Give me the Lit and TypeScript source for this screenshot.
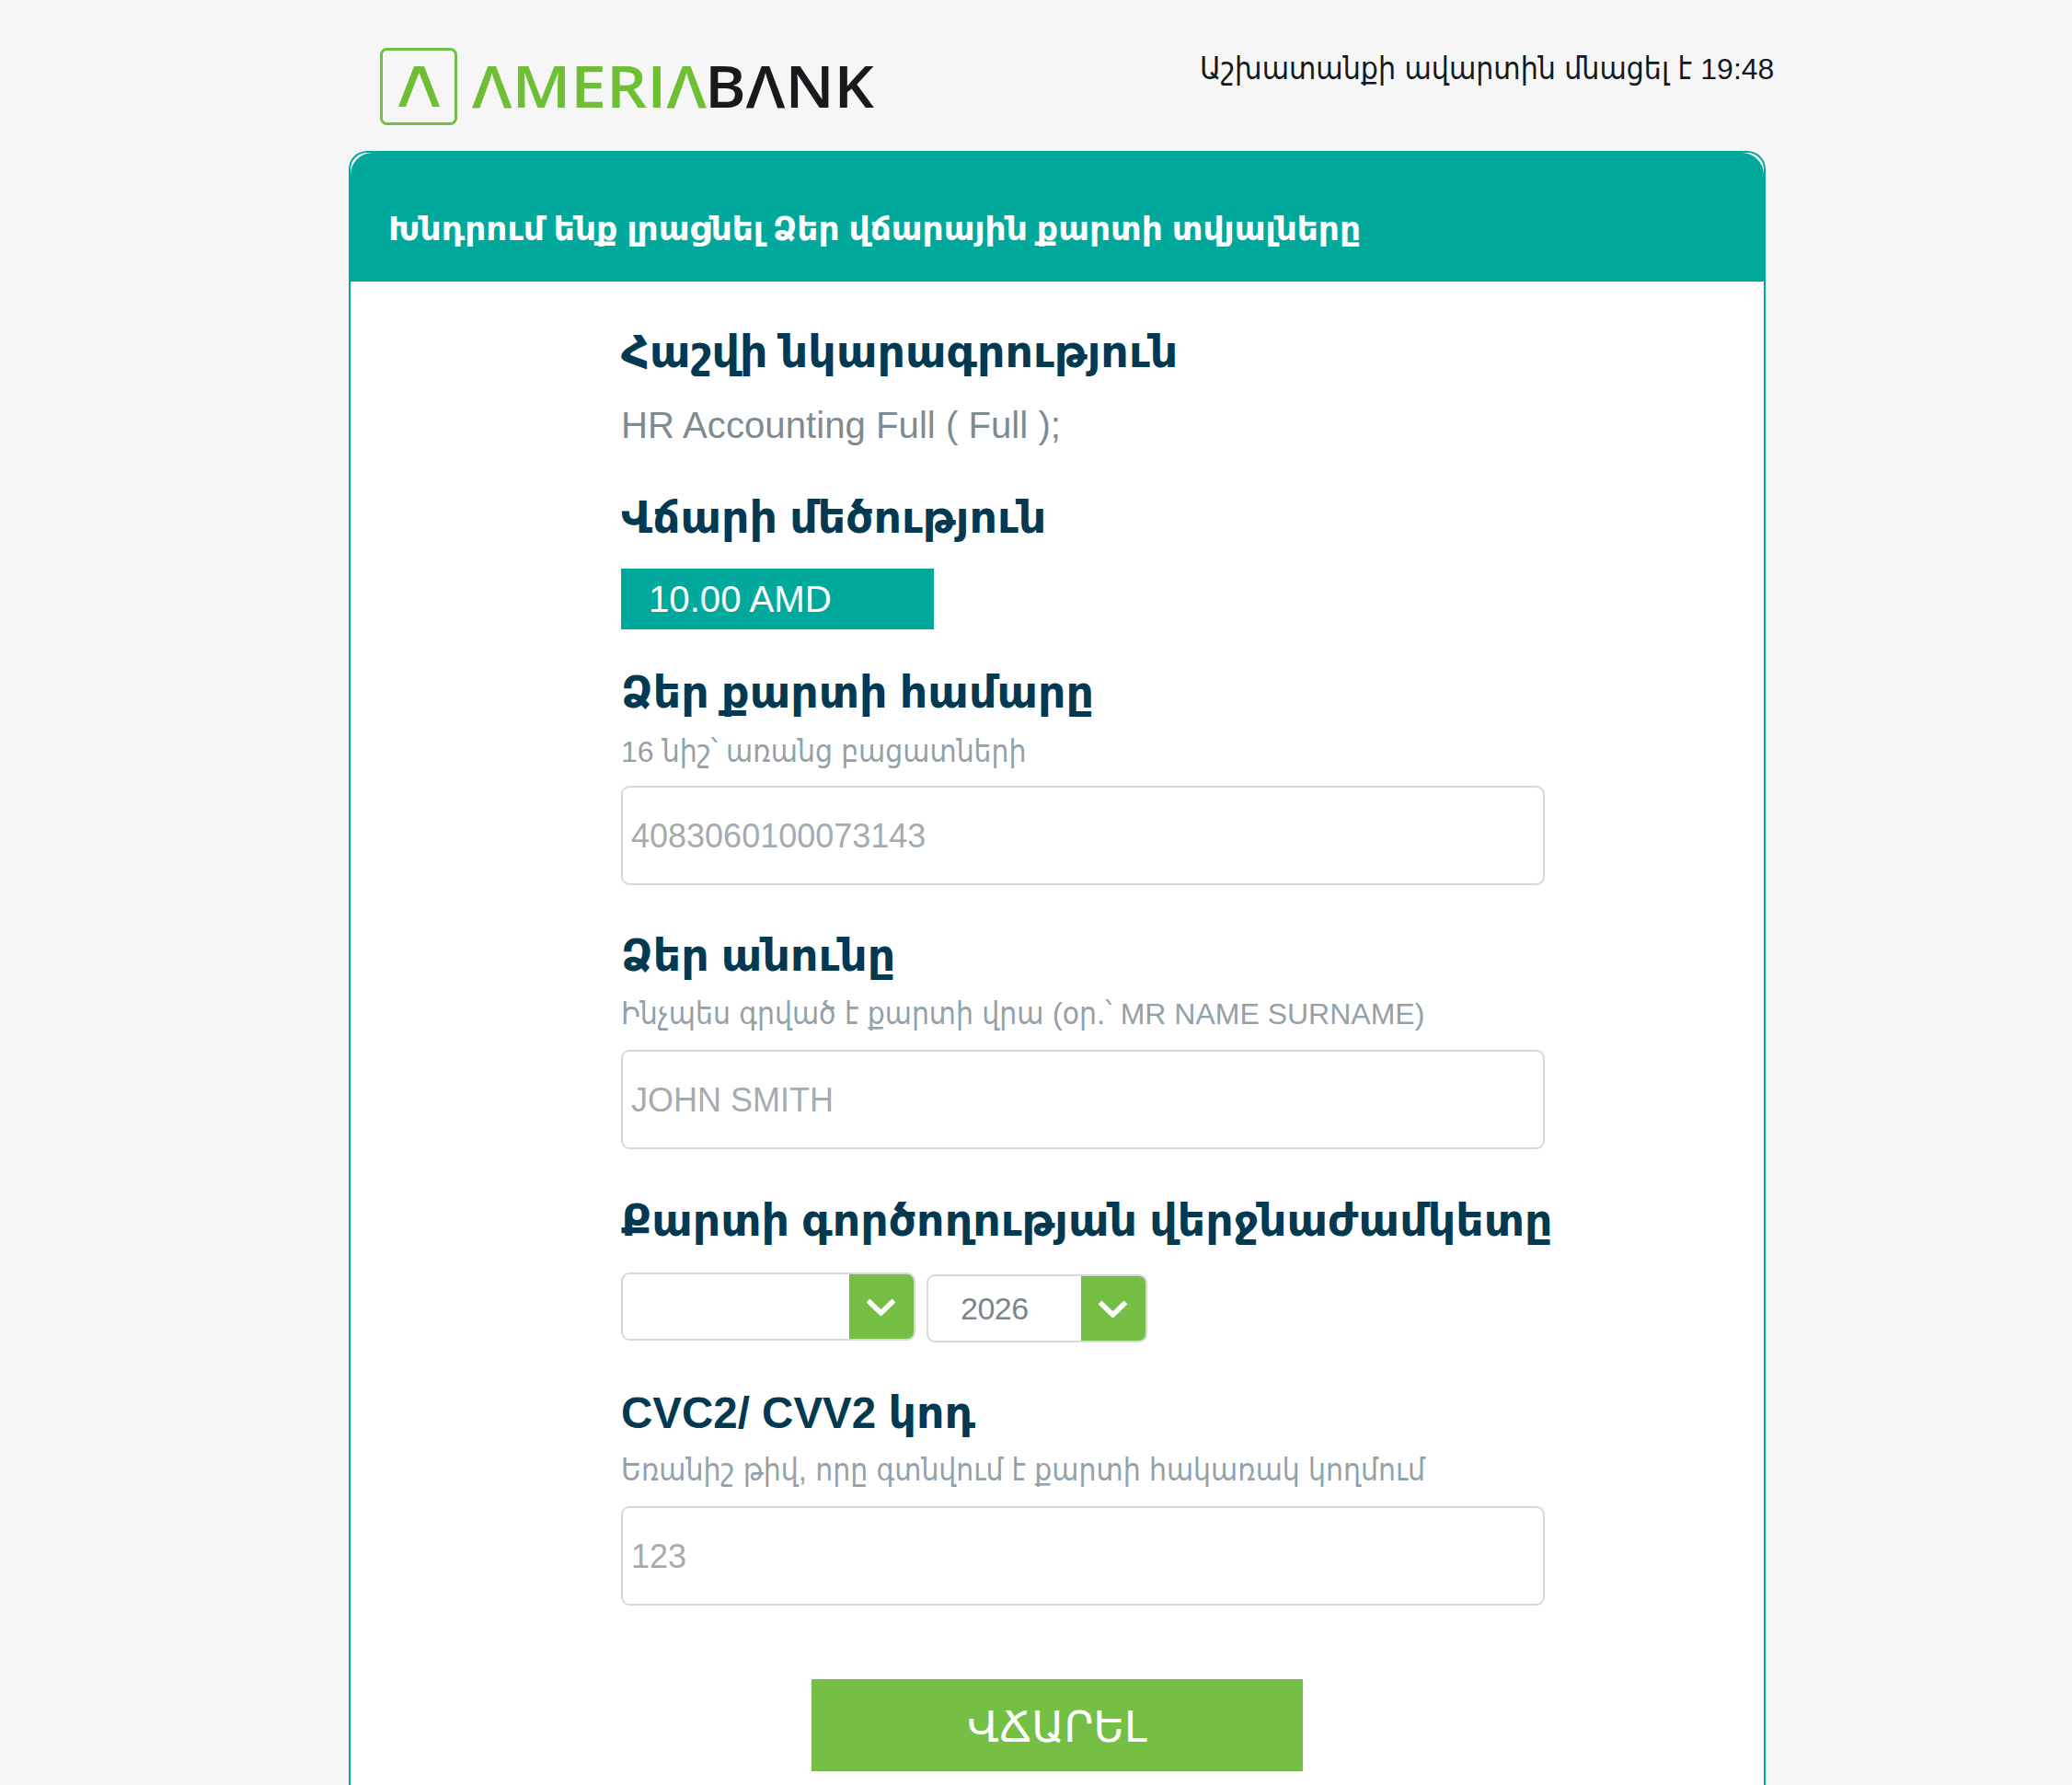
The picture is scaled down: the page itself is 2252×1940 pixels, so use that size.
import { LitElement, html, css } from "lit";
import { customElement } from "lit/decorators.js";

const chevron = html`<svg class="chev" viewBox="0 0 33 19" width="33" height="19"><path d="M2.5 2.5 L16.5 16 L30.5 2.5" fill="none" stroke="#fff" stroke-width="5.5"/></svg>`;

@customElement("app-root")
export class AppRoot extends LitElement {
  static styles = css`
    :host { display: block; height: 1940px; overflow: hidden; background: #f6f6f6; font-family: "Liberation Sans", "DejaVu Sans", sans-serif; }
    * { box-sizing: border-box; }
    .top { display: flex; height: 164px; padding-left: 413px; padding-top: 52px; }
    .logo { display: block; width: 540px; height: 84px; overflow: visible; }
    .timer { position: absolute; left: 1304px; top: 52px; width: 640px; font-size: 33.5px; line-height: 46px; color: #15191c; font-stretch: condensed; white-space: nowrap; }
    .lat { font-size: 32px; }
    .panel { margin-left: 379px; width: 1540px; height: 1776px; background: #fff; border: 2px solid #00a99d; border-bottom: 0; border-radius: 20px 20px 0 0; overflow: hidden; }
    .head { height: 140px; padding: 26px 0 0 41px; display: flex; align-items: center; background: #01a99d; border-radius: 24px 24px 0 0; color: #fff; font-weight: 700; font-size: 36px; white-space: nowrap; }
    .form { margin-left: 294px; width: 1004px; padding-top: 46px; display: flex; flex-direction: column; align-items: flex-start; }
    h2 { margin: 0 0 -1px; padding-top: 1px; font-size: 47.5px; line-height: 60px; font-weight: 700; color: #033a52; white-space: nowrap; }
    .desc { margin-top: 25px; margin-bottom: -1px; padding-top: 1px; font-size: 40.2px; line-height: 50px; color: #7f8b92; }
    .amount { margin-top: 26px; width: 340px; height: 66px; padding: 1px 0 0 30px; display: flex; align-items: center; background: #01a99d; color: #fff; font-size: 40.2px; }
    .sub { margin-bottom: -1px; padding-top: 1px; font-size: 33.3px; line-height: 40px; color: #93a1a9; font-stretch: condensed; white-space: nowrap; }
    .field { width: 1004px; height: 108px; padding: 2px 0 0 9px; border: 2px solid #d8d8d8; border-radius: 9px; background: #fff; font: 36px "Liberation Sans", sans-serif; outline: none; }
    .field::placeholder { color: #a6abaf; opacity: 1; }
    .selects { display: flex; align-items: flex-start; gap: 12px; margin-top: 27px; }
    .select { display: flex; height: 74px; border: 2px solid #d8d8d8; border-radius: 9px; background: #fff; overflow: hidden; }
    .select .val { flex: 1; display: flex; align-items: center; padding-left: 35px; font-size: 34px; color: #7a868e; letter-spacing: -0.5px; }
    .select .arrow { width: 70px; display: flex; align-items: center; justify-content: center; padding-right: 2px; background: #74bf44; }
    .month { width: 320px; }
    .year { width: 240px; margin-top: 2px; }
    .btnrow { display: flex; justify-content: center; margin-top: 80px; }
    .btn { width: 534px; height: 100px; padding-top: 5px; border: 0; background: #74bf44; color: #fff; font: 46px "DejaVu Sans", sans-serif; }
    .mt46 { margin-top: 46px; } .mt45 { margin-top: 45px; } .mt38 { margin-top: 38px; } .mt47 { margin-top: 47px; }
    .mt14 { margin-top: 14px; } .mt13 { margin-top: 13px; } .mt12 { margin-top: 12px; } .mt18 { margin-top: 18px; } .mt20 { margin-top: 20px; }
  `;

  render() {
    return html`
      <div class="top">
        <svg class="logo" viewBox="0 0 540 84">
          <rect x="1.5" y="1.5" width="81" height="81" rx="6" fill="none" stroke="#74bf44" stroke-width="3"/>
          <path d="M20 64 L37 20 H48 L65 64 H57 L42.500 27 L28 64 Z" fill="#6fbf35"/>
          <text x="100" y="65" font-family="Open Sans" font-size="63" font-weight="600" fill="#6fbf35" textLength="255" lengthAdjust="spacingAndGlyphs">ΛMERIΛ</text>
          <text x="353" y="65" font-family="Open Sans" font-size="63" font-weight="600" fill="#17191c" textLength="184" lengthAdjust="spacingAndGlyphs">BΛNK</text>
        </svg>
        <div class="timer">Աշխատանքի ավարտին մնացել է <span class="lat">19:48</span></div>
      </div>
      <div class="panel">
        <div class="head">Խնդրում ենք լրացնել Ձեր վճարային քարտի տվյալները</div>
        <div class="form">
          <h2>Հաշվի նկարագրություն</h2>
          <div class="desc">HR Accounting Full ( Full );</div>
          <h2 class="mt45">Վճարի մեծություն</h2>
          <div class="amount">10.00 AMD</div>
          <h2 class="mt38">Ձեր քարտի համարը</h2>
          <div class="sub mt14"><span class="lat">16</span> նիշ՝ առանց բացատների</div>
          <input class="field mt18" placeholder="4083060100073143" />
          <h2 class="mt46">Ձեր անունը</h2>
          <div class="sub mt13">Ինչպես գրված է քարտի վրա (օր.՝ <span class="lat">MR NAME SURNAME)</span></div>
          <input class="field mt20" placeholder="JOHN SMITH" />
          <h2 class="mt47">Քարտի գործողության վերջնաժամկետը</h2>
          <div class="selects">
            <div class="select month"><div class="val"></div><div class="arrow">${chevron}</div></div>
            <div class="select year"><div class="val">2026</div><div class="arrow">${chevron}</div></div>
          </div>
          <h2 class="mt46">CVC2/ CVV2 կոդ</h2>
          <div class="sub mt12">Եռանիշ թիվ, որը գտնվում է քարտի հակառակ կողմում</div>
          <input class="field mt20" placeholder="123" />
        </div>
        <div class="btnrow"><button class="btn">ՎՃԱՐԵԼ</button></div>
      </div>
    `;
  }
}
